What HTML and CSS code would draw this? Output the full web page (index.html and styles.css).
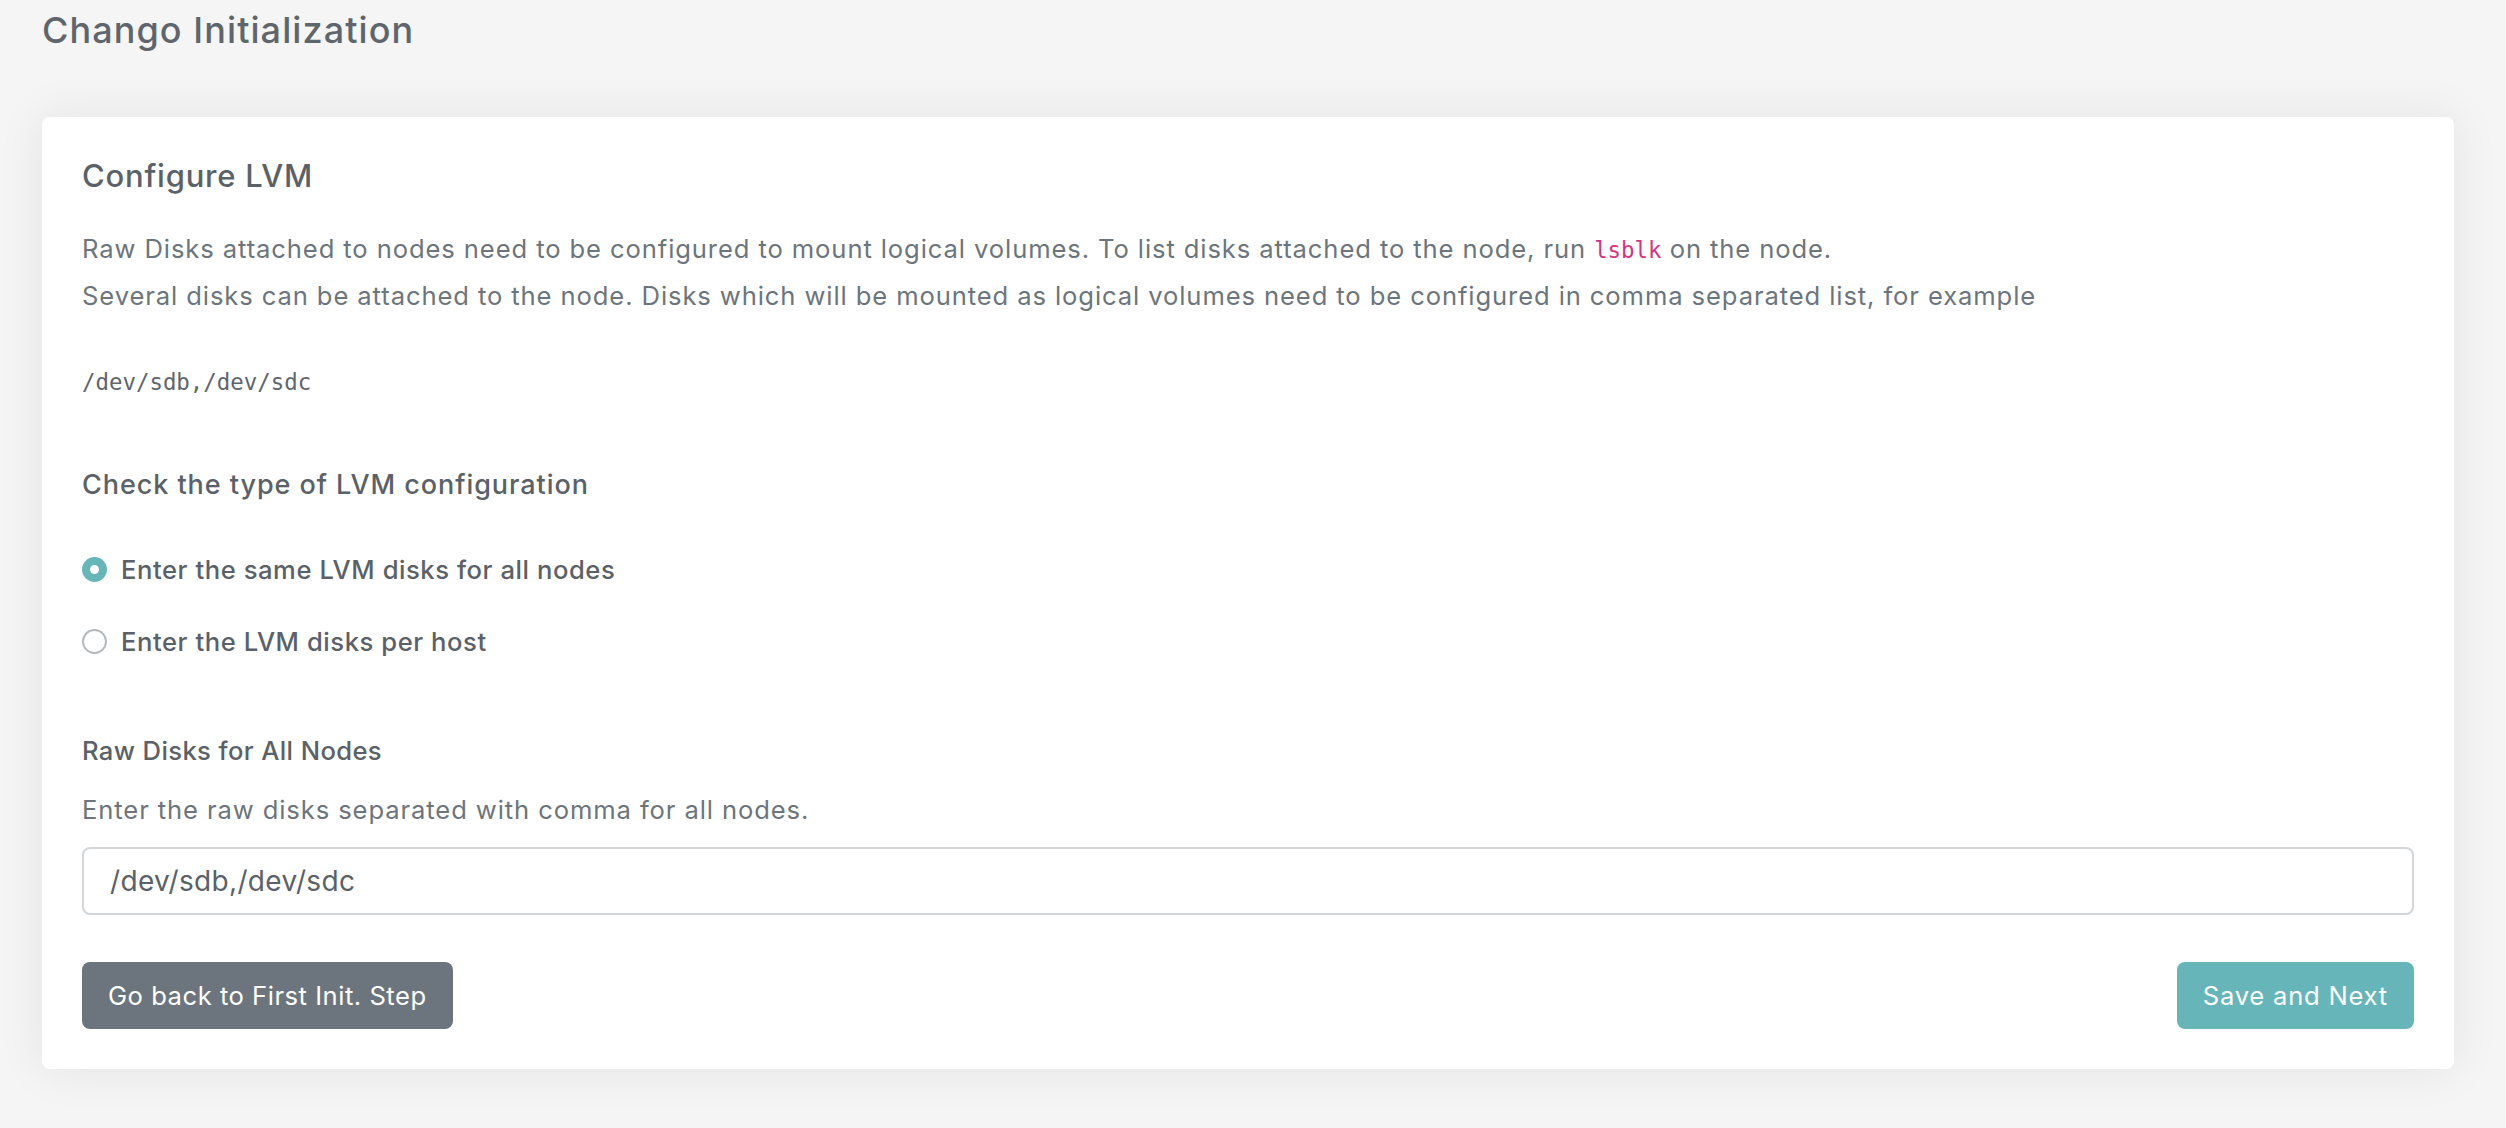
FILE: index.html
```html
<!DOCTYPE html>
<html lang="en">
<head>
<meta charset="utf-8">
<title>Chango Initialization</title>
<link rel="stylesheet" href="styles.css">
</head>
<body>
<div class="page">
  <h1 class="page-title">Chango Initialization</h1>
  <div class="card">
    <h2 class="card-title">Configure LVM</h2>
    <p class="intro">Raw Disks attached to nodes need to be configured to mount logical volumes. To list disks attached to the node, run <code>lsblk</code> on the node.<br>Several disks can be attached to the node. Disks which will be mounted as logical volumes need to be configured in comma separated list, for example</p>
    <pre class="example">/dev/sdb,/dev/sdc</pre>
    <h3 class="section-title">Check the type of LVM configuration</h3>
    <div class="radios">
      <label class="radio"><span class="dot checked"></span><span>Enter the same LVM disks for all nodes</span></label>
      <label class="radio"><span class="dot"></span><span>Enter the LVM disks per host</span></label>
    </div>
    <div class="field-label">Raw Disks for All Nodes</div>
    <div class="field-help">Enter the raw disks separated with comma for all nodes.</div>
    <div class="input">/dev/sdb,/dev/sdc</div>
    <div class="actions">
      <button class="btn btn-secondary">Go back to First Init. Step</button>
      <button class="btn btn-primary">Save and Next</button>
    </div>
  </div>
</div>
</body>
</html>
```
FILE: styles.css
```css
html, body {
  margin: 0;
  padding: 0;
  background: #f5f5f5;
}
body {
  font-family: "Inter", "Open Sans", sans-serif;
  color: #6c757d;
  font-size: 25.6px;
  letter-spacing: 0.035em;
}
.page {
  padding: 10px 52px 60px 42px;
}
.page-title {
  margin: 0;
  font-size: 36px;
  line-height: 40px;
  font-weight: 500;
  letter-spacing: 0.03em;
  color: #5f656c;
}
.card {
  margin-top: 67px;
  background: #fff;
  border-radius: 8px;
  box-shadow: 0 0 48px rgba(0, 0, 0, 0.08);
  padding: 40px 40px 40px 40px;
}
.card-title {
  margin: 0 0 31px 0;
  font-size: 31px;
  line-height: 38px;
  font-weight: 500;
  letter-spacing: 0.025em;
  color: #5a6168;
}
.intro {
  margin: 0;
  line-height: 45px;
}
code {
  font-family: "DejaVu Sans Mono", monospace;
  font-size: 22.4px;
  letter-spacing: 0;
  color: #d63384;
}
.example {
  margin: 46px 0 0 0;
  font-family: "DejaVu Sans Mono", monospace;
  font-size: 22.4px;
  line-height: 36px;
  letter-spacing: 0;
  color: #5f656c;
}
.section-title {
  margin: 65px 0 0 0;
  font-size: 27px;
  line-height: 40px;
  font-weight: 500;
  letter-spacing: 0.035em;
  color: #5a6168;
}
.radios {
  margin-top: 44px;
  display: flex;
  flex-direction: column;
  gap: 32px;
}
.radio {
  display: flex;
  align-items: center;
  gap: 14px;
  height: 40px;
  font-weight: 500;
  letter-spacing: 0.022em;
  color: #5a6168;
}
.dot {
  box-sizing: border-box;
  width: 25px;
  height: 25px;
  border-radius: 50%;
  border: 2px solid #b4b9be;
  background: #fff;
  flex: none;
}
.dot.checked {
  border: 8px solid #66b5b8;
}
.field-label {
  margin-top: 71px;
  line-height: 38px;
  font-weight: 500;
  letter-spacing: 0.015em;
  color: #5a6168;
}
.field-help {
  margin-top: 21px;
  line-height: 38px;
}
.input {
  margin-top: 18px;
  box-sizing: border-box;
  height: 68px;
  border: 2px solid #d3d6d9;
  border-radius: 8px;
  padding: 0 26px;
  display: flex;
  align-items: center;
  font-size: 28px;
  letter-spacing: 0.012em;
  color: #5a6168;
}
.actions {
  margin-top: 47px;
  display: flex;
  justify-content: space-between;
}
.btn {
  font-family: inherit;
  font-size: 25.6px;
  letter-spacing: 0.03em;
  height: 67px;
  padding: 0 26px;
  border: none;
  border-radius: 8px;
  color: #fff;
}
.btn-secondary {
  background: #6c757d;
  letter-spacing: 0.02em;
}
.btn-primary {
  background: #66b5b8;
}
```
